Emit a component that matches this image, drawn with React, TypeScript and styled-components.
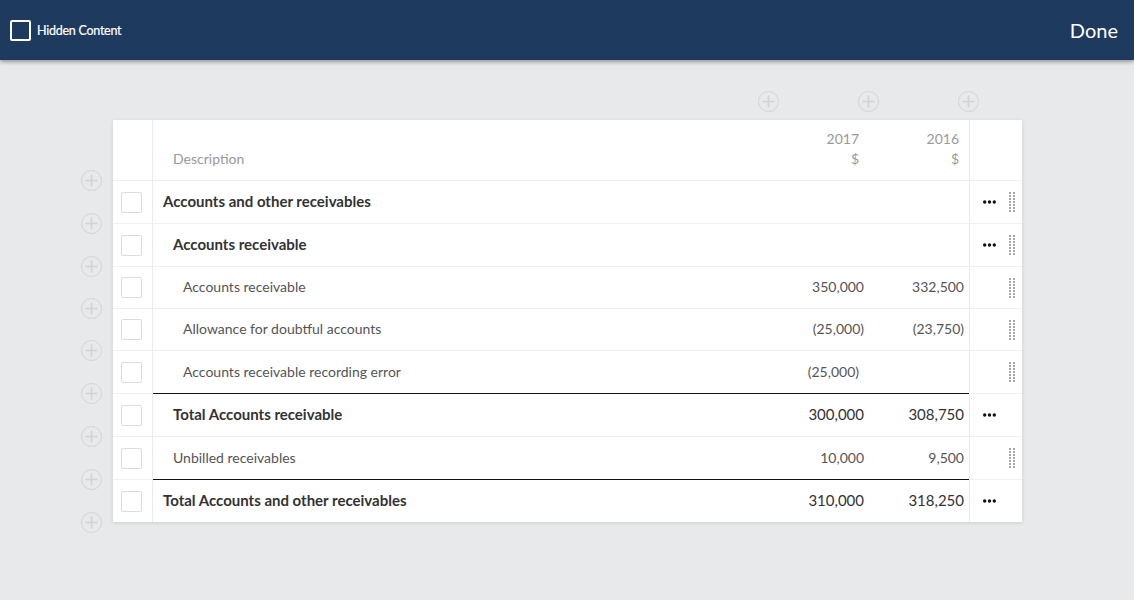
import React from "react";
import styled, { createGlobalStyle } from "styled-components";

const GlobalStyle = createGlobalStyle`
  html, body { margin: 0; padding: 0; background: #e8e9eb; }
  body { font-family: Lato, "Open Sans", Arial, sans-serif; }
  * { box-sizing: border-box; }
`;

const COLS = "40px 616px 100px 100px 53px";

const TopBar = styled.header`
  height: 60px;
  background: #1e3a5f;
  display: flex;
  align-items: center;
  justify-content: space-between;
  padding: 0 16px 0 10px;
  box-shadow: 0 2px 4px rgba(0, 0, 0, 0.35);
  position: relative;
  z-index: 2;
`;

const HiddenToggle = styled.label`
  display: flex;
  align-items: center;
  gap: 6px;
  color: #fff;
  font-size: 12.5px;
  font-weight: 400;
  letter-spacing: -0.25px;
  -webkit-text-stroke: 0.2px #fff;
`;

const HeaderBox = styled.span`
  width: 21px;
  height: 21px;
  border: 2px solid #fff;
  border-radius: 2px;
  display: inline-block;
`;

const DoneButton = styled.span`
  color: #fff;
  font-size: 20px;
  font-weight: 400;
`;

const Content = styled.main`
  padding: 31px 0 60px 113px;
`;

const ColumnAdders = styled.div`
  display: grid;
  grid-template-columns: ${COLS};
  height: 21px;
  margin-bottom: 8px;
`;

const PlusCircle = styled.span`
  width: 21px;
  height: 21px;
  border-radius: 50%;
  border: 1.5px solid #d2d3d6;
  display: inline-flex;
  align-items: center;
  justify-content: center;
  color: #d2d3d6;
`;

const ColumnPlus = styled(PlusCircle)`
  margin-left: -11px;
`;

const RowPlus = styled(PlusCircle)`
  position: absolute;
  left: -32px;
  top: -11px;
`;

const LastRowPlus = styled(RowPlus)`
  top: calc(100% - 10px);
`;

const Card = styled.section`
  width: 909px;
  background: #fff;
  box-shadow: 0 1px 4px rgba(0, 0, 0, 0.12);
`;

const Row = styled.div<{ $h: number }>`
  display: grid;
  grid-template-columns: ${COLS};
  height: ${(p) => p.$h}px;
  position: relative;
  border-bottom: 1px solid #f0f0f0;
  &:last-child { border-bottom: none; }
`;

const CheckCell = styled.div`
  border-right: 1px solid #ebebeb;
  display: flex;
  align-items: center;
  padding-left: 8px;
`;

const RowCheck = styled.span`
  width: 21px;
  height: 21px;
  border: 1px solid #dcdcdc;
  border-radius: 2px;
`;

const DescCell = styled.div<{ $level: number; $bold: boolean; $total: boolean }>`
  display: flex;
  align-items: center;
  padding-left: ${(p) => 10 + p.$level * 10}px;
  padding-bottom: 2px;
  font-size: ${(p) => (p.$bold ? 15 : 14)}px;
  font-weight: ${(p) => (p.$bold ? 700 : 400)};
  color: ${(p) => (p.$bold ? "#333" : "#555")};
  border-top: ${(p) => (p.$total ? "1px solid #111" : "none")};
  margin-top: ${(p) => (p.$total ? "-1px" : "0")};
`;

const NumCell = styled.div<{ $total: boolean; $pad?: number }>`
  display: flex;
  align-items: center;
  justify-content: flex-end;
  padding-right: ${(p) => p.$pad ?? 5}px;
  padding-bottom: 2px;
  font-size: ${(p) => (p.$total ? 15 : 14)}px;
  color: ${(p) => (p.$total ? "#333" : "#555")};
  border-top: ${(p) => (p.$total ? "1px solid #111" : "none")};
  margin-top: ${(p) => (p.$total ? "-1px" : "0")};
`;

const ActionCell = styled.div`
  border-left: 1px solid #ebebeb;
  display: grid;
  grid-template-columns: 13px 6px;
  column-gap: 13px;
  align-items: center;
  padding-left: 13px;
`;

const IconSlot = styled.span`
  display: flex;
  align-items: center;
`;

const HeadCell = styled.div`
  display: flex;
  flex-direction: column;
  justify-content: flex-end;
  align-items: flex-start;
  padding: 0 10px 11px 20px;
  font-size: 14px;
  line-height: 20px;
  color: #999;
`;

const HeadNum = styled(HeadCell)`
  padding: 0 10px 11px 0;
  align-items: flex-end;
`;

const Plus = () => (
  <svg width="13" height="13" viewBox="0 0 13 13">
    <path d="M6.5 0.5v12M0.5 6.5h12" stroke="currentColor" strokeWidth="1.7" fill="none" />
  </svg>
);

const Ellipsis = () => (
  <svg width="13" height="4" viewBox="0 0 13 4">
    <circle cx="1.7" cy="2" r="1.7" fill="#111" />
    <circle cx="6.5" cy="2" r="1.7" fill="#111" />
    <circle cx="11.3" cy="2" r="1.7" fill="#111" />
  </svg>
);

const DragHandle = () => (
  <svg width="6" height="20" viewBox="0 0 6 20">
    {[0, 3, 6, 9, 12, 15, 18].map((y) => (
      <React.Fragment key={y}>
        <rect x="0" y={y} width="2" height="2" fill="#a8a8a8" />
        <rect x="4" y={y} width="2" height="2" fill="#a8a8a8" />
      </React.Fragment>
    ))}
  </svg>
);

type RowData = {
  label: string;
  level: number;
  bold: boolean;
  total?: boolean;
  v2017?: string;
  v2016?: string;
  pad2017?: number;
  menu?: boolean;
  drag?: boolean;
  h: number;
};

const rows: RowData[] = [
  { label: "Accounts and other receivables", level: 0, bold: true, menu: true, drag: true, h: 43 },
  { label: "Accounts receivable", level: 1, bold: true, menu: true, drag: true, h: 43 },
  { label: "Accounts receivable", level: 2, bold: false, v2017: "350,000", v2016: "332,500", drag: true, h: 42 },
  { label: "Allowance for doubtful accounts", level: 2, bold: false, v2017: "(25,000)", v2016: "(23,750)", drag: true, h: 42 },
  { label: "Accounts receivable recording error", level: 2, bold: false, v2017: "(25,000)", pad2017: 10, drag: true, h: 43 },
  { label: "Total Accounts receivable", level: 1, bold: true, total: true, v2017: "300,000", v2016: "308,750", menu: true, h: 43 },
  { label: "Unbilled receivables", level: 1, bold: false, v2017: "10,000", v2016: "9,500", drag: true, h: 43 },
  { label: "Total Accounts and other receivables", level: 0, bold: true, total: true, v2017: "310,000", v2016: "318,250", menu: true, h: 42 },
];

export default function App() {
  return (
    <>
      <GlobalStyle />
      <TopBar>
        <HiddenToggle>
          <HeaderBox />
          Hidden Content
        </HiddenToggle>
        <DoneButton>Done</DoneButton>
      </TopBar>
      <Content>
        <ColumnAdders>
          <span />
          <span />
          <ColumnPlus><Plus /></ColumnPlus>
          <ColumnPlus><Plus /></ColumnPlus>
          <ColumnPlus><Plus /></ColumnPlus>
        </ColumnAdders>
        <Card>
          <Row $h={61}>
            <CheckCell />
            <HeadCell>
              <span>Description</span>
            </HeadCell>
            <HeadNum>
              <span>2017</span>
              <span>$</span>
            </HeadNum>
            <HeadNum>
              <span>2016</span>
              <span>$</span>
            </HeadNum>
            <ActionCell />
          </Row>
          {rows.map((r, i) => (
            <Row key={i} $h={r.h}>
              <RowPlus><Plus /></RowPlus>
              {i === rows.length - 1 && <LastRowPlus><Plus /></LastRowPlus>}
              <CheckCell>
                <RowCheck />
              </CheckCell>
              <DescCell $level={r.level} $bold={r.bold} $total={!!r.total}>
                {r.label}
              </DescCell>
              <NumCell $total={!!r.total} $pad={r.pad2017}>{r.v2017}</NumCell>
              <NumCell $total={!!r.total}>{r.v2016}</NumCell>
              <ActionCell>
                <IconSlot>{r.menu && <Ellipsis />}</IconSlot>
                <IconSlot>{r.drag && <DragHandle />}</IconSlot>
              </ActionCell>
            </Row>
          ))}
        </Card>
      </Content>
    </>
  );
}
